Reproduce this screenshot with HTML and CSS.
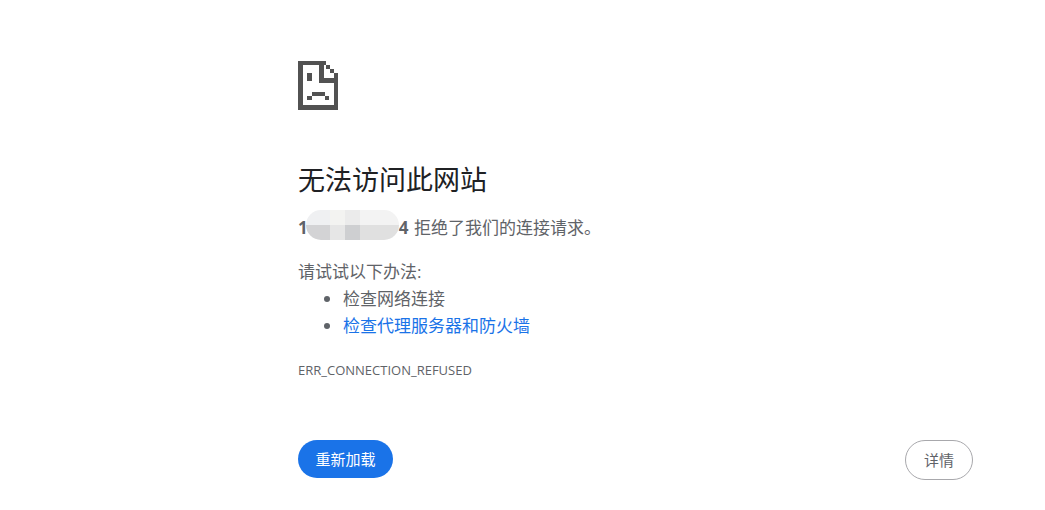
FILE: index.html
```html
<!DOCTYPE html>
<html lang="zh-CN">
<head>
<meta charset="utf-8">
<title>无法访问此网站</title>
<link rel="stylesheet" href="styles.css">
</head>
<body>
<main class="page">
  <svg class="icon" width="40" height="49" viewBox="0 0 40 49" shape-rendering="crispEdges" aria-hidden="true">
    <g fill="#525252">
      <rect x="0" y="0" width="28" height="4"/>
      <rect x="0" y="0" width="5" height="49"/>
      <rect x="0" y="44" width="40" height="5"/>
      <rect x="36" y="12" width="4" height="37"/>
      <rect x="21" y="0" width="5" height="22"/>
      <rect x="21" y="17" width="19" height="5"/>
      <rect x="28" y="4" width="4" height="4"/>
      <rect x="32" y="8" width="4" height="4"/>
      <rect x="9" y="12" width="5" height="8"/>
      <rect x="14" y="31" width="13" height="4"/>
      <rect x="9" y="35" width="5" height="4"/>
      <rect x="27" y="35" width="4" height="4"/>
    </g>
  </svg>
  <h1 class="title">无法访问此网站</h1>
  <p class="message"><span class="host"><strong>1</strong><span class="masked"></span><strong>4</strong><span class="mosaic" aria-hidden="true"><i class="m1"></i><i class="m2"></i><i class="m3"></i><i class="m4"></i><i class="m5"></i><i class="m6"></i><i class="m7"></i><i class="m8"></i></span></span> <span class="refused">拒绝了我们的连接请求。</span></p>
  <p class="try">请试试以下办法:</p>
  <ul class="tips">
    <li>检查网络连接</li>
    <li><a href="#">检查代理服务器和防火墙</a></li>
  </ul>
  <p class="code">ERR_CONNECTION_REFUSED</p>
  <div class="actions">
    <button class="btn primary">重新加载</button>
    <button class="btn secondary">详情</button>
  </div>
</main>
</body>
</html>
```

FILE: styles.css
```css
html, body {
  margin: 0;
  padding: 0;
  background: #fff;
}
body {
  font-family: "Open Sans", "Noto Sans CJK SC", sans-serif;
  font-size: 17px;
  color: #5f6368;
}
.page {
  width: 675px;
  margin-left: 298px;
  padding-top: 61px;
}
.icon {
  display: block;
}
.title {
  margin: 52px 0 0;
  font-size: 27px;
  line-height: 36px;
  font-weight: 400;
  color: #202124;
}
.message {
  margin: 18px 0 0;
  line-height: 24px;
  height: 24px;
  white-space: nowrap;
}
.refused {
  margin-left: 1px;
}
.host {
  position: relative;
  display: inline-block;
}
.masked {
  display: inline-block;
  width: 91px;
  height: 1px;
}
.mosaic {
  position: absolute;
  left: 8px;
  top: -6px;
  width: 93px;
  height: 30px;
  border-radius: 15px;
  overflow: hidden;
  display: grid;
  grid-template-columns: 24px 15px 15px 39px;
  grid-template-rows: 15px 15px;
}
.m1 { background: #eff0f2; }
.m2 { background: #f3f3f1; }
.m3 { background: #ebebeb; }
.m4 { background: #f3f3f3; }
.m5 { background: #d3d3d5; }
.m6 { background: #e6e6e6; }
.m7 { background: #cecfd1; }
.m8 { background: #e0e0e0; }
.try {
  margin: 20px 0 0;
  line-height: 24px;
}
.tips {
  margin: 1px 0 0;
  padding: 0 0 0 45px;
  list-style: disc;
}
.tips li {
  line-height: 27px;
}
.tips a {
  color: #1a73e8;
  text-decoration: none;
}
.code {
  margin: 22px 0 0;
  font-size: 13px;
  line-height: 18px;
}
.actions {
  margin-top: 61px;
  display: flex;
  justify-content: space-between;
  align-items: flex-start;
}
.btn {
  font-family: inherit;
  font-size: 15px;
  border-radius: 20px;
  padding: 0 0 2px;
}
.primary {
  width: 95px;
  height: 38px;
  border: 0;
  background: #1a73e8;
  color: #fff;
}
.secondary {
  width: 68px;
  height: 40px;
  border: 1px solid #a8a8ac;
  background: #fff;
  color: #5f6368;
}
```
